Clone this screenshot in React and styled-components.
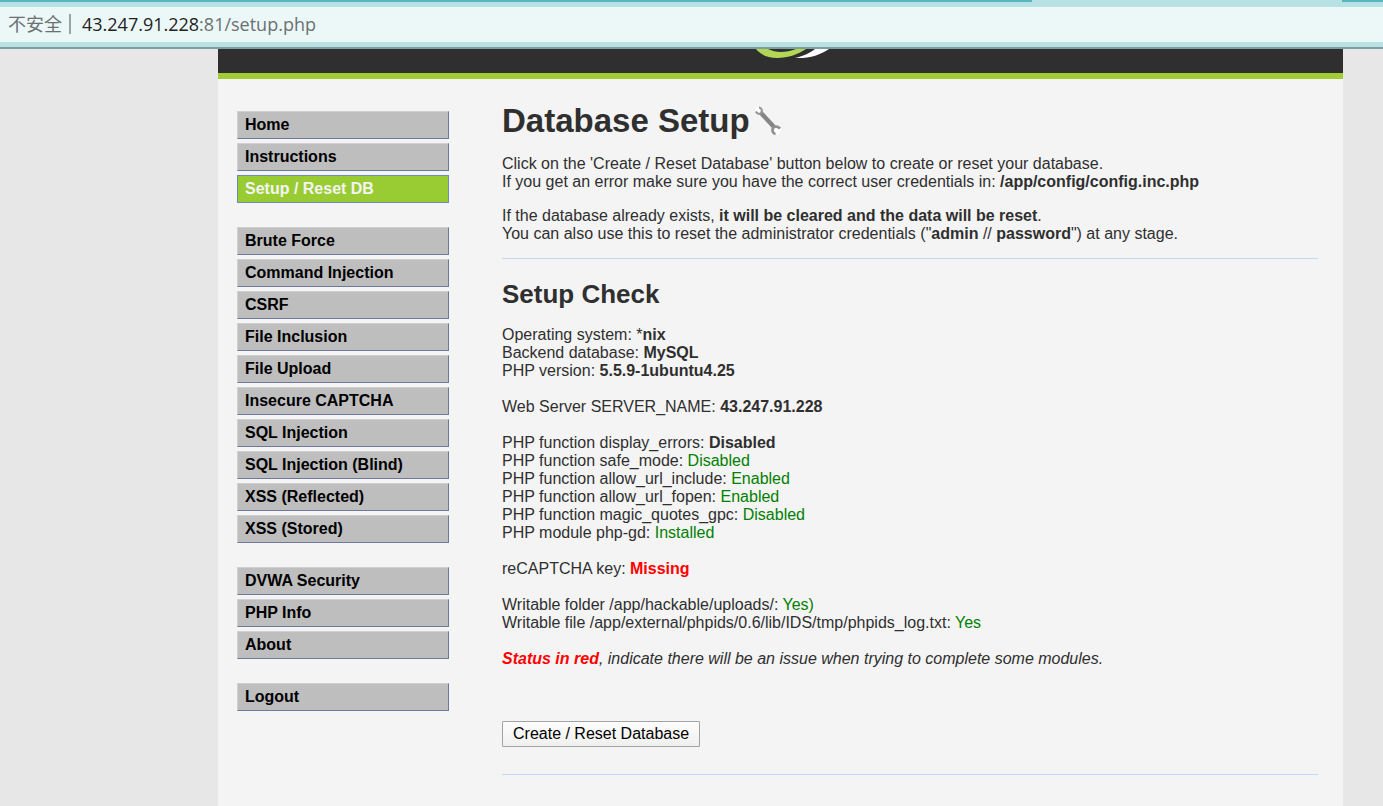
import React from "react";
import styled, { createGlobalStyle, css } from "styled-components";

const GlobalStyle = createGlobalStyle`
	* {
		box-sizing: border-box;
	}

	body {
		margin: 0;
		background: #e7e7e7;
		color: #2f2f2f;
		font-family: Arial, "Liberation Sans", sans-serif;
		font-size: 16px;
		line-height: 18px;
	}
`;

const Browser = styled.header`
	background: #b8e1e4;
	border-bottom: 2px solid #7c9ea0;
`;

const TabStrip = styled.div`
	display: flex;
	justify-content: space-between;
	height: 2px;
	margin-bottom: 5px;
`;

const TabEdge = styled.span`
	width: ${(props) => props.$width};
	background: #57b6bd;
`;

const AddressBar = styled.div`
	display: flex;
	align-items: center;
	height: 35px;
	margin-bottom: 5px;
	padding: 0 8px 2px;
	background: #ecf8f8;
	color: #6b7071;
	font-family: "Open Sans", "Noto Sans CJK SC", sans-serif;
	font-size: 18px;
`;

const Divider = styled.span`
	width: 2px;
	height: 20px;
	margin: 0 11px 0 7px;
	background: #9aa3a4;
`;

const Host = styled.span`
	color: #1f2223;
`;

const Page = styled.div`
	margin: 0 40px 0 218px;
	background: #f4f4f4;
`;

const Banner = styled.div`
	display: flex;
	justify-content: center;
	align-items: flex-start;
	height: 30px;
	background: #2f2f2f;
	border-bottom: 6px solid #a1cc33;
`;

const Body = styled.div`
	display: flex;
	align-items: flex-start;
	gap: 53px;
	padding: 22px 25px 32px 19px;
`;

const Menu = styled.nav`
	display: flex;
	flex-direction: column;
	flex: none;
	gap: 24px;
	width: 212px;
	padding-top: 10px;
`;

const MenuGroup = styled.ul`
	display: flex;
	flex-direction: column;
	gap: 4px;
	margin: 0;
	padding: 0;
	list-style: none;
`;

const MenuLink = styled.a`
	display: block;
	height: 28px;
	padding: 0 7px;
	border: 1px solid;
	border-color: #d0d0d0 #6b7a99 #6b7a99 #d0d0d0;
	background: #bebebe;
	color: #000;
	font-weight: bold;
	line-height: 26px;
	text-decoration: none;

	${(props) =>
		props.$selected &&
		css`
			border-color: #7189b5;
			background: #99cc33;
			color: #f4f4f4;
		`}
`;

const Main = styled.main`
	flex: 1;
	min-width: 0;
`;

const Title = styled.h1`
	display: flex;
	align-items: center;
	gap: 5px;
	margin: 0 0 15px;
	font-size: 33px;
	line-height: 39px;
`;

const Subtitle = styled.h2`
	margin: 20px 0 17px;
	font-size: 26px;
	line-height: 30px;
`;

const Text = styled.p`
	margin: 0 0 16px;
`;

const Note = styled(Text)`
	margin-bottom: 15px;
`;

const Checks = styled.p`
	margin: 0 0 18px;
`;

const Status = styled.span`
	color: ${(props) => (props.$bad ? "#f00" : "#008000")};
	font-weight: ${(props) => (props.$bad ? "bold" : "normal")};
`;

const Rule = styled.hr`
	height: 0;
	margin: 0;
	border: 0;
	border-top: 1px solid #c0d8ff;
`;

const SubmitButton = styled.button`
	display: block;
	height: 26px;
	margin: 53px 0 27px;
	padding: 0 10px;
	border: 1px solid #a2a2a2;
	border-radius: 1px;
	background: linear-gradient(#fdfdfd, #f0f0ee);
	color: #000;
	font: inherit;
`;

const menu = [
	["Home", "Instructions", "Setup / Reset DB"],
	[
		"Brute Force",
		"Command Injection",
		"CSRF",
		"File Inclusion",
		"File Upload",
		"Insecure CAPTCHA",
		"SQL Injection",
		"SQL Injection (Blind)",
		"XSS (Reflected)",
		"XSS (Stored)",
	],
	["DVWA Security", "PHP Info", "About"],
	["Logout"],
];

const Logo = () => (
	<svg width="101" height="10" viewBox="0 0 101 10" aria-hidden="true">
		<path d="M26 0C31 6 38 9 47 9C58 9 69 5 76 0H66C56 3.800 46 4 38 0Z" fill="#b2d656" />
		<path d="M99 0C90 6 80 9.500 65 9C74 7 80 4 85 0Z" fill="#fff" />
	</svg>
);

const Wrench = () => (
	<svg width="26" height="30" viewBox="0 0 26 30" fill="none" aria-hidden="true">
		<circle cx="3.500" cy="4" r="3" fill="#fff" />
		<circle cx="22" cy="25" r="3.500" fill="#fff" />
		<path d="M6 7L19 21" stroke="#858585" strokeWidth="4.400" />
		<path d="M4 1.500C7 2 7.500 5 6 7C4.500 8.500 2 8 1 5.500" stroke="#969696" strokeWidth="2.200" />
		<path d="M25 22.500C22.500 20 19 20 17.800 22.500C16.800 25 18 27.500 20.500 28" stroke="#909090" strokeWidth="2.800" />
	</svg>
);

export default function App() {
	return (
		<>
			<GlobalStyle />
			<Browser>
				<TabStrip>
					<TabEdge $width="74.6%" />
					<TabEdge $width="3%" />
				</TabStrip>
				<AddressBar>
					<span>不安全</span>
					<Divider />
					<Host>43.247.91.228</Host>
					<span>:81/setup.php</span>
				</AddressBar>
			</Browser>
			<Page>
				<Banner>
					<Logo />
				</Banner>
				<Body>
					<Menu>
						{menu.map((group) => (
							<MenuGroup key={group[0]}>
								{group.map((item) => (
									<li key={item}>
										<MenuLink href="#" $selected={item === "Setup / Reset DB"}>
											{item}
										</MenuLink>
									</li>
								))}
							</MenuGroup>
						))}
					</Menu>
					<Main>
						<Title>
							Database Setup
							<Wrench />
						</Title>
						<Text>
							Click on the 'Create / Reset Database' button below to create or reset your database.
							<br />
							If you get an error make sure you have the correct user credentials in: <b>/app/config/config.inc.php</b>
						</Text>
						<Note>
							If the database already exists, <b>it will be cleared and the data will be reset</b>.
							<br />
							You can also use this to reset the administrator credentials ("<b>admin</b> // <b>password</b>") at any
							stage.
						</Note>
						<Rule />
						<Subtitle>Setup Check</Subtitle>
						<Checks>
							Operating system: *<b>nix</b>
							<br />
							Backend database: <b>MySQL</b>
							<br />
							PHP version: <b>5.5.9-1ubuntu4.25</b>
						</Checks>
						<Checks>
							Web Server SERVER_NAME: <b>43.247.91.228</b>
						</Checks>
						<Checks>
							PHP function display_errors: <b>Disabled</b>
							<br />
							PHP function safe_mode: <Status>Disabled</Status>
							<br />
							PHP function allow_url_include: <Status>Enabled</Status>
							<br />
							PHP function allow_url_fopen: <Status>Enabled</Status>
							<br />
							PHP function magic_quotes_gpc: <Status>Disabled</Status>
							<br />
							PHP module php-gd: <Status>Installed</Status>
						</Checks>
						<Checks>
							reCAPTCHA key: <Status $bad>Missing</Status>
						</Checks>
						<Checks>
							Writable folder /app/hackable/uploads/: <Status>Yes)</Status>
							<br />
							Writable file /app/external/phpids/0.6/lib/IDS/tmp/phpids_log.txt: <Status>Yes</Status>
						</Checks>
						<Checks>
							<i>
								<Status $bad>Status in red</Status>, indicate there will be an issue when trying to complete some
								modules.
							</i>
						</Checks>
						<form>
							<SubmitButton type="button">Create / Reset Database</SubmitButton>
						</form>
						<Rule />
					</Main>
				</Body>
			</Page>
		</>
	);
}
